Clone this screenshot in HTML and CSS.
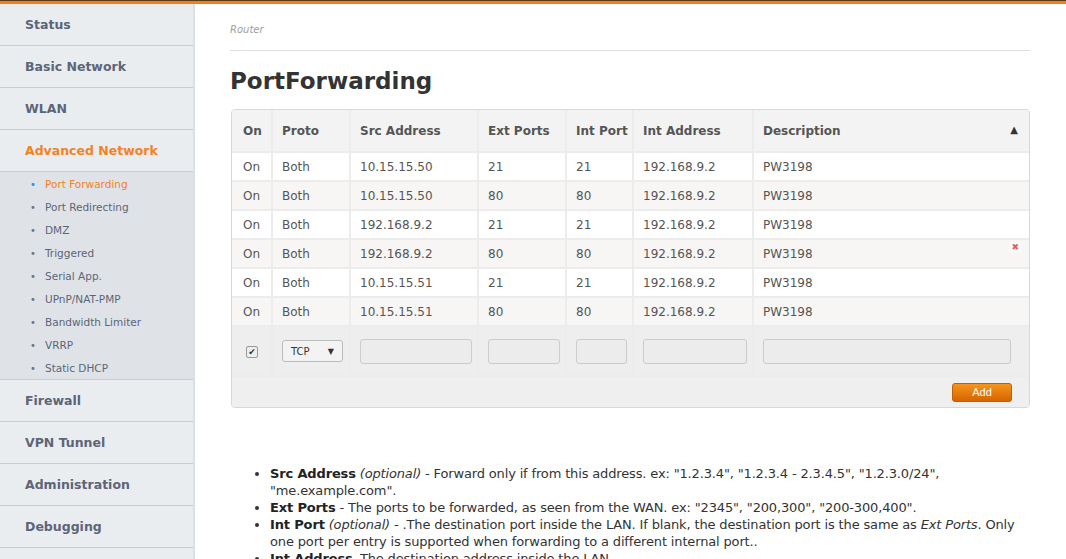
FILE: index.html
```html
<!DOCTYPE html>
<html lang="en">
<head>
    <meta charset="UTF-8">
    <title>PortForwarding</title>
    <link rel="stylesheet" href="styles.css">
</head>
<body>
    <div class="topbar"></div>
    <div class="layout">
        <!-- Sidebar -->
        <nav class="sidebar">
            <a class="nav-item">Status</a>
            <a class="nav-item">Basic Network</a>
            <a class="nav-item">WLAN</a>
            <a class="nav-item active">Advanced Network</a>
            <ul class="submenu">
                <li class="current">Port Forwarding</li>
                <li>Port Redirecting</li>
                <li>DMZ</li>
                <li>Triggered</li>
                <li>Serial App.</li>
                <li>UPnP/NAT-PMP</li>
                <li>Bandwidth Limiter</li>
                <li>VRRP</li>
                <li>Static DHCP</li>
            </ul>
            <a class="nav-item">Firewall</a>
            <a class="nav-item">VPN Tunnel</a>
            <a class="nav-item">Administration</a>
            <a class="nav-item">Debugging</a>
        </nav>

        <!-- Main content -->
        <main class="content">
            <div class="crumb">Router</div>
            <h1>PortForwarding</h1>

            <div class="grid-box">
                <table class="grid">
                    <tr class="head">
                        <th class="c-on">On</th>
                        <th class="c-proto">Proto</th>
                        <th class="c-src">Src Address</th>
                        <th class="c-ext">Ext Ports</th>
                        <th class="c-int">Int Port</th>
                        <th class="c-addr">Int Address</th>
                        <th class="c-desc">Description <span class="sort">▲</span></th>
                    </tr>
                    <tr><td>On</td><td>Both</td><td>10.15.15.50</td><td>21</td><td>21</td><td>192.168.9.2</td><td>PW3198</td></tr>
                    <tr class="alt"><td>On</td><td>Both</td><td>10.15.15.50</td><td>80</td><td>80</td><td>192.168.9.2</td><td>PW3198</td></tr>
                    <tr><td>On</td><td>Both</td><td>192.168.9.2</td><td>21</td><td>21</td><td>192.168.9.2</td><td>PW3198</td></tr>
                    <tr class="alt"><td>On</td><td>Both</td><td>192.168.9.2</td><td>80</td><td>80</td><td>192.168.9.2</td><td class="has-del">PW3198<span class="del">✖</span></td></tr>
                    <tr><td>On</td><td>Both</td><td>10.15.15.51</td><td>21</td><td>21</td><td>192.168.9.2</td><td>PW3198</td></tr>
                    <tr class="alt"><td>On</td><td>Both</td><td>10.15.15.51</td><td>80</td><td>80</td><td>192.168.9.2</td><td>PW3198</td></tr>
                    <tr class="edit">
                        <td><span class="check">✔</span></td>
                        <td><span class="select">TCP <span class="caret">▼</span></span></td>
                        <td><span class="field"></span></td>
                        <td><span class="field"></span></td>
                        <td><span class="field"></span></td>
                        <td><span class="field"></span></td>
                        <td class="last"><span class="field"></span></td>
                    </tr>
                    <tr class="foot">
                        <td colspan="7"><button class="btn-add">Add</button></td>
                    </tr>
                </table>
            </div>

            <ul class="help">
                <li><b>Src Address</b> <i>(optional)</i> - Forward only if from this address. ex: "1.2.3.4", "1.2.3.4 - 2.3.4.5", "1.2.3.0/24", "me.example.com".</li>
                <li><b>Ext Ports</b> - The ports to be forwarded, as seen from the WAN. ex: "2345", "200,300", "200-300,400".</li>
                <li><b>Int Port</b> <i>(optional)</i> - .The destination port inside the LAN. If blank, the destination port is the same as <i>Ext Ports</i>. Only one port per entry is supported when forwarding to a different internal port..</li>
                <li><b>Int Address</b> -The destination address inside the LAN.</li>
            </ul>
        </main>
    </div>
</body>
</html>
```

FILE: styles.css
```css
html, body { margin: 0; padding: 0; background: #fff; }
body { font-family: 'DejaVu Sans', 'Liberation Sans', sans-serif; color: #333; overflow: hidden; }

.topbar { height: 3px; background: #f47f16; border-top: 1px solid #5a3a18; }
.layout { display: flex; align-items: flex-start; }

.sidebar { width: 193px; flex: none; background: #eaedf0; border-right: 2px solid #dcdfe3; display: flex; flex-direction: column; min-height: 560px; }
.nav-item { display: block; height: 41px; line-height: 41px; padding-left: 25px; border-bottom: 1px solid #c8ccd0; font-size: 12.5px; font-weight: bold; color: #5c6577; }
.nav-item.active { color: #f5811f; }
.submenu { list-style: none; margin: 0; padding: 1px 0 0; background: #dfe3e7; border-bottom: 1px solid #c8ccd0; height: 206px; }
.submenu li { height: 23px; line-height: 23px; font-size: 10.5px; color: #5c6577; padding-left: 45px; position: relative; }
.submenu li::before { content: "•"; position: absolute; left: 30px; color: #6d7585; font-size: 10px; }
.submenu li.current { color: #f5811f; }
.submenu li.current::before { color: #2e8de0; }

.content { flex: 1; padding: 0 36px 0 35px; }
.crumb { font-size: 10px; font-style: italic; color: #a0a0a0; margin-top: 20px; padding-bottom: 15px; border-bottom: 1px solid #ddd; }
h1 { font-size: 23px; font-weight: bold; color: #333; margin: 17px 0 15px; }

.grid-box { border: 1px solid #d8d8d8; border-radius: 4px; overflow: hidden; margin-left: 1px; }
.grid { width: 100%; table-layout: fixed; border-collapse: collapse; font-size: 12px; color: #555; }
.grid th, .grid td { border-right: 2px solid #ececec; border-bottom: 2px solid #ececec; padding: 0 0 0 9px; text-align: left; height: 27px; white-space: nowrap; }
.grid th:last-child, .grid td:last-child { border-right: 0; }
.grid th:first-child, .grid td:first-child { padding-left: 11px; }
.grid th { background: #f3f3f3; height: 41px; font-weight: bold; color: #555; font-size: 12px; }
.c-on { width: 28px; }
.c-proto { width: 67px; }
.c-src { width: 117px; }
.c-ext { width: 77px; }
.c-int { width: 56px; }
.c-addr { width: 109px; }
.sort { float: right; margin-right: 11px; font-size: 10px; color: #333; }
.grid tr.alt td { background: #f7f6f4; }
.has-del { position: relative; }
.del { position: absolute; right: 8px; top: 2px; font-size: 9px; color: #e06060; background: #fafafa; padding: 0 2px; }

.grid tr.edit td { background: #eee; height: 48px; padding-left: 9px; padding-right: 5px; }
.grid tr.edit td:first-child { padding-left: 14px; }
.grid tr.edit td.last { padding-right: 18px; }
.check { display: inline-block; width: 10px; height: 10px; border: 1px solid #999; border-radius: 2px; background: #eee; font-size: 9px; line-height: 10px; text-align: center; color: #333; }
.select { display: inline-flex; align-items: center; justify-content: space-between; box-sizing: border-box; width: 61px; height: 22px; padding: 0 8px; border: 1px solid #bbb; border-radius: 3px; background: #f3f3f3; font-size: 10px; color: #333; }
.caret { font-size: 8px; }
.field { display: block; height: 23px; border: 1px solid #ccc; border-radius: 3px; background: #ececec; }

.grid tr.foot td { background: #efefef; height: 30px; border-bottom: 0; text-align: right; padding-right: 17px; }
.btn-add { width: 60px; height: 19px; border: 1px solid #c65d00; border-radius: 3px; background: linear-gradient(#f7941d, #d46500); color: #fff; font-family: 'Liberation Sans', sans-serif; font-size: 11px; padding: 0; }

.help { margin: 57px 0 0 0; padding-left: 40px; font-size: 13px; line-height: 17px; color: #333; letter-spacing: -0.15px; }
.help li { margin: 0; }
.help b { color: #222; }
```
